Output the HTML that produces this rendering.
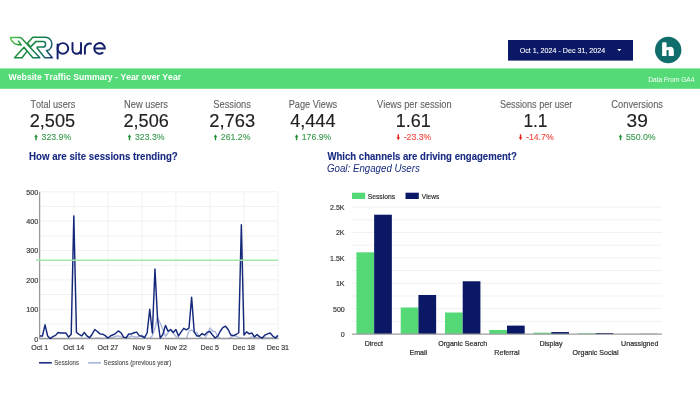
<!DOCTYPE html>
<html><head><meta charset="utf-8"><style>
html,body{margin:0;padding:0;background:#fff;width:700px;height:400px;overflow:hidden}
svg{display:block;filter:blur(0.3px)}
text{font-family:"Liberation Sans", sans-serif;font-kerning:none;font-feature-settings:"kern" 0,"liga" 0}
</style></head><body>
<svg width="700" height="400" viewBox="0 0 700 400">
<defs>
<linearGradient id="lg" x1="10" y1="37" x2="53" y2="58" gradientUnits="userSpaceOnUse">
<stop offset="0" stop-color="#62c454"/>
<stop offset="0.15" stop-color="#3fae48"/>
<stop offset="0.3" stop-color="#1b8e3b"/>
<stop offset="0.6" stop-color="#14814a"/>
<stop offset="0.8" stop-color="#166a66"/>
<stop offset="1" stop-color="#1b2f7a"/>
</linearGradient>
</defs>
<rect width="700" height="400" fill="#fff"/>
<g fill="#fff" stroke="url(#lg)" stroke-width="1.5" stroke-linejoin="round" stroke-linecap="round">
<path d="M27.6 43 L32.8 37.3 L45.2 37.3 C49.2 37.3 51.9 40.5 51.9 44 C51.9 47.6 49.5 50.5 46.4 50.6 L52.3 57.7 L44.8 57.7 L37.2 48.3 L37.2 47.1 L43.2 47.1 C44.7 47.1 45.6 45.8 45.6 44.2 C45.6 42.6 44.7 41.4 43.2 41.4 L36 41.4 L30.4 47.1 Z"/>
<path d="M14.5 57.7 L24 47.2 L27.3 50.9 L22 57.7 Z"/>
<path d="M18.4 41 L21.2 45 C16 45 11.5 42.5 10.4 37.4 L20.8 37.4 L39.8 57.7 L32.8 57.7 L24 47.2"/>
</g>
<g fill="none" stroke="#15206b" stroke-width="1.95" stroke-linecap="round">
<path d="M57.6 44.4 L57.6 58.4"/>
<circle cx="62.9" cy="48.4" r="5.3"/>
<path d="M72.5 43 L72.5 49.5 A4.25 4.25 0 0 0 81 49.5 L81 43 M81 49.5 L81 53.8"/>
<path d="M84.9 53.8 L84.9 48.5 A4.8 4.8 0 0 1 91 43.8"/>
<path d="M94.4 48.4 L104.8 48.4 A5.3 5.3 0 1 0 102.6 52.7"/>
</g>
<rect x="508" y="40" width="125" height="20.6" fill="#0a1866"/>
<text transform="translate(519.66 53.10) scale(0.9018 1)" font-size="7.90" fill="#fff" stroke="#fff" stroke-width="0.1">Oct 1, 2024 - Dec 31, 2024</text>
<path d="M617.2 49 L621.4 49 L619.3 51.3 Z" fill="#fff"/>
<circle cx="668.2" cy="50" r="13.2" fill="#0f6d6b"/>
<path d="M662.1 43.4 Q662.1 42.2 663.3 42.2 L665.4 42.2 Q666.6 42.2 666.6 43.4 L666.6 47.4 C667.6 47 668.8 46.8 670.3 46.8 C672.5 46.8 673.8 48.2 673.8 50.5 L673.8 56 L668.7 56 L668.7 51.2 C668.7 50.3 668.1 49.9 667.5 50 L666.5 50.3 L666.5 56 L662.1 56 Z" fill="#fff"/>
<rect x="0" y="68.4" width="700" height="20.4" fill="#54da76"/>
<text transform="translate(8.59 80.00) scale(0.8961 1)" font-size="9.70" fill="#fff" font-weight="bold">Website Traffic Summary - Year over Year</text>
<text transform="translate(648.36 82.40) scale(0.9412 1)" font-size="7.00" fill="#fff">Data From GA4</text>
<text transform="translate(30.40 107.60) scale(0.8906 1)" font-size="10.20" fill="#616161" stroke="#616161" stroke-width="0.1">Total users</text>
<text transform="translate(29.69 126.70) scale(1.0326 1)" font-size="17.60" fill="#202124" stroke="#202124" stroke-width="0.15">2,505</text>
<text transform="translate(41.52 139.90) scale(1.0566 1)" font-size="8.30" fill="#3a9a4e" stroke="#3a9a4e" stroke-width="0.12">323.9%</text>
<path d="M36.05 134.3 L34.25 137.3 L35.35 137.3 L35.35 140.2 L36.75 140.2 L36.75 137.3 L37.85 137.3 Z" fill="#1f8f34"/>
<text transform="translate(123.98 107.60) scale(0.9154 1)" font-size="10.20" fill="#616161" stroke="#616161" stroke-width="0.1">New users</text>
<text transform="translate(123.49 126.70) scale(1.0287 1)" font-size="17.60" fill="#202124" stroke="#202124" stroke-width="0.15">2,506</text>
<text transform="translate(134.97 139.90) scale(1.0566 1)" font-size="8.30" fill="#3a9a4e" stroke="#3a9a4e" stroke-width="0.12">323.3%</text>
<path d="M129.50 134.3 L127.70 137.3 L128.80 137.3 L128.80 140.2 L130.20 140.2 L130.20 137.3 L131.30 137.3 Z" fill="#1f8f34"/>
<text transform="translate(213.33 107.60) scale(0.9086 1)" font-size="10.20" fill="#616161" stroke="#616161" stroke-width="0.1">Sessions</text>
<text transform="translate(209.33 126.70) scale(1.0417 1)" font-size="17.60" fill="#202124" stroke="#202124" stroke-width="0.15">2,763</text>
<text transform="translate(220.84 139.90) scale(1.0566 1)" font-size="8.30" fill="#3a9a4e" stroke="#3a9a4e" stroke-width="0.12">261.2%</text>
<path d="M215.48 134.3 L213.68 137.3 L214.78 137.3 L214.78 140.2 L216.18 140.2 L216.18 137.3 L217.28 137.3 Z" fill="#1f8f34"/>
<text transform="translate(288.65 107.60) scale(0.9020 1)" font-size="10.20" fill="#616161" stroke="#616161" stroke-width="0.1">Page Views</text>
<text transform="translate(290.18 126.70) scale(1.0296 1)" font-size="17.60" fill="#202124" stroke="#202124" stroke-width="0.15">4,444</text>
<text transform="translate(301.70 139.90) scale(1.0566 1)" font-size="8.30" fill="#3a9a4e" stroke="#3a9a4e" stroke-width="0.12">176.9%</text>
<path d="M296.57 134.3 L294.77 137.3 L295.87 137.3 L295.87 140.2 L297.27 140.2 L297.27 137.3 L298.37 137.3 Z" fill="#1f8f34"/>
<text transform="translate(376.96 107.60) scale(0.9080 1)" font-size="10.20" fill="#616161" stroke="#616161" stroke-width="0.1">Views per session</text>
<text transform="translate(395.63 126.70) scale(1.0233 1)" font-size="17.60" fill="#202124" stroke="#202124" stroke-width="0.15">1.61</text>
<text transform="translate(403.67 139.90) scale(1.0566 1)" font-size="8.30" fill="#f04a42" stroke="#f04a42" stroke-width="0.12">-23.3%</text>
<path d="M398.26 140.2 L396.46 137.2 L397.56 137.2 L397.56 134.3 L398.96 134.3 L398.96 137.2 L400.06 137.2 Z" fill="#e8221a"/>
<text transform="translate(499.89 107.60) scale(0.8888 1)" font-size="10.20" fill="#616161" stroke="#616161" stroke-width="0.1">Sessions per user</text>
<text transform="translate(523.38 126.70) scale(0.9835 1)" font-size="17.60" fill="#202124" stroke="#202124" stroke-width="0.15">1.1</text>
<text transform="translate(525.97 139.90) scale(1.0566 1)" font-size="8.30" fill="#f04a42" stroke="#f04a42" stroke-width="0.12">-14.7%</text>
<path d="M520.56 140.2 L518.76 137.2 L519.86 137.2 L519.86 134.3 L521.26 134.3 L521.26 137.2 L522.36 137.2 Z" fill="#e8221a"/>
<text transform="translate(611.33 107.60) scale(0.9121 1)" font-size="10.20" fill="#616161" stroke="#616161" stroke-width="0.1">Conversions</text>
<text transform="translate(626.47 126.70) scale(1.0900 1)" font-size="17.60" fill="#202124" stroke="#202124" stroke-width="0.15">39</text>
<text transform="translate(625.96 139.90) scale(1.0566 1)" font-size="8.30" fill="#3a9a4e" stroke="#3a9a4e" stroke-width="0.12">550.0%</text>
<path d="M620.51 134.3 L618.71 137.3 L619.81 137.3 L619.81 140.2 L621.21 140.2 L621.21 137.3 L622.31 137.3 Z" fill="#1f8f34"/>
<text transform="translate(29.05 160.00) scale(0.8663 1)" font-size="11.20" fill="#182a80" font-weight="bold" stroke="#182a80" stroke-width="0.12">How are site sessions trending?</text>
<text transform="translate(327.49 160.00) scale(0.8565 1)" font-size="11.20" fill="#182a80" font-weight="bold" stroke="#182a80" stroke-width="0.12">Which channels are driving engagement?</text>
<text transform="translate(327.02 172.20) scale(0.9524 1)" font-size="10.20" fill="#182a80" font-style="italic">Goal: Engaged Users</text>
<g stroke="#efefef" stroke-width="0.9"><line x1="40" y1="323.92" x2="278" y2="323.92"/><line x1="40" y1="309.24" x2="278" y2="309.24"/><line x1="40" y1="294.56" x2="278" y2="294.56"/><line x1="40" y1="279.88" x2="278" y2="279.88"/><line x1="40" y1="265.20" x2="278" y2="265.20"/><line x1="40" y1="250.52" x2="278" y2="250.52"/><line x1="40" y1="235.84" x2="278" y2="235.84"/><line x1="40" y1="221.16" x2="278" y2="221.16"/><line x1="40" y1="206.48" x2="278" y2="206.48"/><line x1="40" y1="191.80" x2="278" y2="191.80"/><line x1="73.83" y1="192" x2="73.83" y2="338.6"/><line x1="107.86" y1="192" x2="107.86" y2="338.6"/><line x1="141.89" y1="192" x2="141.89" y2="338.6"/><line x1="175.91" y1="192" x2="175.91" y2="338.6"/><line x1="209.94" y1="192" x2="209.94" y2="338.6"/><line x1="243.97" y1="192" x2="243.97" y2="338.6"/><line x1="278.00" y1="192" x2="278.00" y2="338.6"/></g>
<line x1="39.6" y1="191.8" x2="39.6" y2="339" stroke="#999" stroke-width="1.3"/>
<text transform="translate(34.19 341.50) scale(0.9200 1)" font-size="7.80" fill="#3a3a3a" stroke="#3a3a3a" stroke-width="0.2">0</text>
<text transform="translate(26.21 312.14) scale(0.9200 1)" font-size="7.80" fill="#3a3a3a" stroke="#3a3a3a" stroke-width="0.2">100</text>
<text transform="translate(26.21 282.78) scale(0.9200 1)" font-size="7.80" fill="#3a3a3a" stroke="#3a3a3a" stroke-width="0.2">200</text>
<text transform="translate(26.21 253.42) scale(0.9200 1)" font-size="7.80" fill="#3a3a3a" stroke="#3a3a3a" stroke-width="0.2">300</text>
<text transform="translate(26.21 224.06) scale(0.9200 1)" font-size="7.80" fill="#3a3a3a" stroke="#3a3a3a" stroke-width="0.2">400</text>
<text transform="translate(26.21 194.70) scale(0.9200 1)" font-size="7.80" fill="#3a3a3a" stroke="#3a3a3a" stroke-width="0.2">500</text>
<text transform="translate(31.34 350.00) scale(0.9200 1)" font-size="7.70" fill="#3a3a3a" stroke="#3a3a3a" stroke-width="0.2">Oct 1</text>
<text transform="translate(63.33 350.00) scale(0.9200 1)" font-size="7.70" fill="#3a3a3a" stroke="#3a3a3a" stroke-width="0.2">Oct 14</text>
<text transform="translate(97.43 350.00) scale(0.9200 1)" font-size="7.70" fill="#3a3a3a" stroke="#3a3a3a" stroke-width="0.2">Oct 27</text>
<text transform="translate(132.51 350.00) scale(0.9200 1)" font-size="7.70" fill="#3a3a3a" stroke="#3a3a3a" stroke-width="0.2">Nov 9</text>
<text transform="translate(164.58 350.00) scale(0.9200 1)" font-size="7.70" fill="#3a3a3a" stroke="#3a3a3a" stroke-width="0.2">Nov 22</text>
<text transform="translate(200.55 350.00) scale(0.9200 1)" font-size="7.70" fill="#3a3a3a" stroke="#3a3a3a" stroke-width="0.2">Dec 5</text>
<text transform="translate(232.61 350.00) scale(0.9200 1)" font-size="7.70" fill="#3a3a3a" stroke="#3a3a3a" stroke-width="0.2">Dec 18</text>
<text transform="translate(266.66 350.00) scale(0.9200 1)" font-size="7.70" fill="#3a3a3a" stroke="#3a3a3a" stroke-width="0.2">Dec 31</text>
<polyline points="39.80,338.60 42.42,338.60 45.04,338.60 47.65,338.60 50.27,338.60 52.89,338.60 55.51,338.60 58.12,338.60 60.74,338.60 63.36,338.60 65.98,338.60 68.59,338.60 71.21,338.60 73.83,338.31 76.45,338.31 79.06,338.31 81.68,338.31 84.30,338.31 86.92,338.31 89.53,338.31 92.15,338.31 94.77,338.31 97.39,338.01 100.00,338.31 102.62,338.31 105.24,338.31 107.86,338.01 110.47,337.72 113.09,337.13 115.71,336.25 118.33,335.96 120.95,336.84 123.56,337.72 126.18,338.01 128.80,337.13 131.42,335.96 134.03,336.54 136.65,337.13 139.27,336.25 141.89,335.08 144.50,337.43 147.12,338.31 149.74,338.31 152.36,335.66 154.97,328.32 157.59,317.46 160.21,323.33 162.83,329.20 165.44,336.25 168.06,332.73 170.68,329.79 173.30,333.32 175.91,336.25 178.53,338.01 181.15,338.60 183.77,338.60 186.38,338.60 189.00,331.26 191.62,329.79 194.24,332.14 196.85,332.43 199.47,336.84 202.09,338.31 204.71,338.31 207.33,334.49 209.94,328.03 212.56,330.97 215.18,331.55 217.80,336.84 220.41,338.31 223.03,338.60 225.65,338.60 228.27,338.31 230.88,337.43 233.50,335.66 236.12,336.25 238.74,337.43 241.35,338.01 243.97,338.31 246.59,338.31 249.21,338.01 251.82,336.84 254.44,337.43 257.06,337.72 259.68,338.01 262.29,337.72 264.91,337.43 267.53,337.72 270.15,338.01 272.76,337.72 275.38,337.43 278.00,337.72" fill="none" stroke="#aab5dc" stroke-width="1.35" stroke-linejoin="round"/>
<line x1="39.1" y1="338.6" x2="278.5" y2="338.6" stroke="#999" stroke-width="1.5"/>
<polyline points="39.80,335.96 42.42,335.96 45.04,324.80 47.65,335.96 50.27,338.60 52.89,336.54 55.51,335.37 58.12,332.43 60.74,333.02 63.36,333.02 65.98,333.02 68.59,337.13 71.21,334.20 73.83,215.88 76.45,332.43 79.06,334.49 81.68,335.96 84.30,332.43 86.92,335.96 89.53,337.72 92.15,334.20 94.77,329.50 97.39,331.55 100.00,333.90 102.62,334.20 105.24,335.66 107.86,338.01 110.47,335.96 113.09,334.78 115.71,333.32 118.33,330.97 120.95,332.73 123.56,337.13 126.18,337.72 128.80,333.90 131.42,333.90 134.03,332.73 136.65,332.14 139.27,335.66 141.89,336.25 144.50,337.72 147.12,333.02 149.74,309.24 152.36,333.02 154.97,269.02 157.59,319.52 160.21,338.01 162.83,334.49 165.44,325.39 168.06,331.26 170.68,329.50 173.30,332.43 175.91,329.50 178.53,335.96 181.15,331.85 183.77,328.32 186.38,329.79 189.00,328.03 191.62,297.20 194.24,332.14 196.85,335.96 199.47,335.96 202.09,333.61 204.71,335.08 207.33,332.14 209.94,331.55 212.56,335.08 215.18,338.01 217.80,335.96 220.41,330.97 223.03,327.44 225.65,326.27 228.27,329.79 230.88,335.08 233.50,335.66 236.12,334.49 238.74,332.73 241.35,224.68 243.97,335.08 246.59,331.85 249.21,333.90 251.82,333.02 254.44,336.84 257.06,334.49 259.68,336.84 262.29,338.01 264.91,335.08 267.53,333.90 270.15,333.02 272.76,335.96 275.38,338.01 278.00,335.37" fill="none" stroke="#14287a" stroke-width="1.45" stroke-linejoin="round"/>
<line x1="36" y1="260.2" x2="278" y2="260.2" stroke="#9fe8a6" stroke-width="1.35"/>
<line x1="39" y1="362.8" x2="51.8" y2="362.8" stroke="#24378a" stroke-width="1.7"/>
<text transform="translate(54.32 365.30) scale(0.8453 1)" font-size="7.20" fill="#4a4a4a" stroke="#4a4a4a" stroke-width="0.1">Sessions</text>
<line x1="88.2" y1="362.8" x2="101" y2="362.8" stroke="#aab5dc" stroke-width="1.7"/>
<text transform="translate(103.62 365.30) scale(0.8540 1)" font-size="7.20" fill="#4a4a4a" stroke="#4a4a4a" stroke-width="0.1">Sessions (previous year)</text>
<g stroke="#efefef" stroke-width="0.9"><line x1="352" y1="321.40" x2="662" y2="321.40"/><line x1="352" y1="308.70" x2="662" y2="308.70"/><line x1="352" y1="296.00" x2="662" y2="296.00"/><line x1="352" y1="283.30" x2="662" y2="283.30"/><line x1="352" y1="270.60" x2="662" y2="270.60"/><line x1="352" y1="257.90" x2="662" y2="257.90"/><line x1="352" y1="245.20" x2="662" y2="245.20"/><line x1="352" y1="232.50" x2="662" y2="232.50"/><line x1="352" y1="219.80" x2="662" y2="219.80"/><line x1="352" y1="207.10" x2="662" y2="207.10"/></g>
<text transform="translate(330.01 210.00) scale(0.9200 1)" font-size="7.70" fill="#3a3a3a" stroke="#3a3a3a" stroke-width="0.2">2.5K</text>
<text transform="translate(335.91 235.40) scale(0.9200 1)" font-size="7.70" fill="#3a3a3a" stroke="#3a3a3a" stroke-width="0.2">2K</text>
<text transform="translate(330.01 260.80) scale(0.9200 1)" font-size="7.70" fill="#3a3a3a" stroke="#3a3a3a" stroke-width="0.2">1.5K</text>
<text transform="translate(335.91 286.20) scale(0.9200 1)" font-size="7.70" fill="#3a3a3a" stroke="#3a3a3a" stroke-width="0.2">1K</text>
<text transform="translate(332.96 311.60) scale(0.9200 1)" font-size="7.70" fill="#3a3a3a" stroke="#3a3a3a" stroke-width="0.2">500</text>
<text transform="translate(340.84 337.00) scale(0.9200 1)" font-size="7.70" fill="#3a3a3a" stroke="#3a3a3a" stroke-width="0.2">0</text>
<rect x="356.43" y="252.31" width="17.71" height="81.79" fill="#55d977"/>
<rect x="374.14" y="214.72" width="17.71" height="119.38" fill="#0a1866"/>
<text transform="translate(364.63 345.80) scale(0.9200 1)" font-size="7.70" fill="#2a2a2a" stroke="#2a2a2a" stroke-width="0.2">Direct</text>
<rect x="400.71" y="307.48" width="17.71" height="26.62" fill="#55d977"/>
<rect x="418.43" y="294.98" width="17.71" height="39.12" fill="#0a1866"/>
<text transform="translate(409.52 354.80) scale(0.9200 1)" font-size="7.70" fill="#2a2a2a" stroke="#2a2a2a" stroke-width="0.2">Email</text>
<rect x="445.00" y="312.51" width="17.71" height="21.59" fill="#55d977"/>
<rect x="462.71" y="281.27" width="17.71" height="52.83" fill="#0a1866"/>
<text transform="translate(438.17 345.80) scale(0.9200 1)" font-size="7.70" fill="#2a2a2a" stroke="#2a2a2a" stroke-width="0.2">Organic Search</text>
<rect x="489.29" y="329.99" width="17.71" height="4.11" fill="#55d977"/>
<rect x="507.00" y="325.62" width="17.71" height="8.48" fill="#0a1866"/>
<text transform="translate(494.35 354.80) scale(0.9200 1)" font-size="7.70" fill="#2a2a2a" stroke="#2a2a2a" stroke-width="0.2">Referral</text>
<rect x="533.57" y="332.68" width="17.71" height="1.42" fill="#55d977"/>
<rect x="551.29" y="332.07" width="17.71" height="2.03" fill="#0a1866"/>
<text transform="translate(539.39 345.80) scale(0.9200 1)" font-size="7.70" fill="#2a2a2a" stroke="#2a2a2a" stroke-width="0.2">Display</text>
<rect x="577.86" y="333.34" width="17.71" height="0.76" fill="#55d977"/>
<rect x="595.57" y="332.98" width="17.71" height="1.12" fill="#0a1866"/>
<text transform="translate(572.61 354.80) scale(0.9200 1)" font-size="7.70" fill="#2a2a2a" stroke="#2a2a2a" stroke-width="0.2">Organic Social</text>
<rect x="622.14" y="333.90" width="17.71" height="0.20" fill="#55d977"/>
<rect x="639.86" y="333.80" width="17.71" height="0.30" fill="#0a1866"/>
<text transform="translate(621.11 345.80) scale(0.9200 1)" font-size="7.70" fill="#2a2a2a" stroke="#2a2a2a" stroke-width="0.2">Unassigned</text>
<line x1="352" y1="334.10" x2="662" y2="334.10" stroke="#9e9e9e" stroke-width="1.1"/>
<rect x="352" y="192.7" width="13.2" height="6.3" fill="#55d977"/>
<text transform="translate(367.69 198.80) scale(0.9362 1)" font-size="7.20" fill="#2a2a2a" stroke="#3a3a3a" stroke-width="0.2">Sessions</text>
<rect x="405.5" y="192.7" width="13.3" height="6.3" fill="#0a1866"/>
<text transform="translate(421.77 198.80) scale(0.9094 1)" font-size="7.20" fill="#2a2a2a" stroke="#3a3a3a" stroke-width="0.2">Views</text>
</svg>
</body></html>
